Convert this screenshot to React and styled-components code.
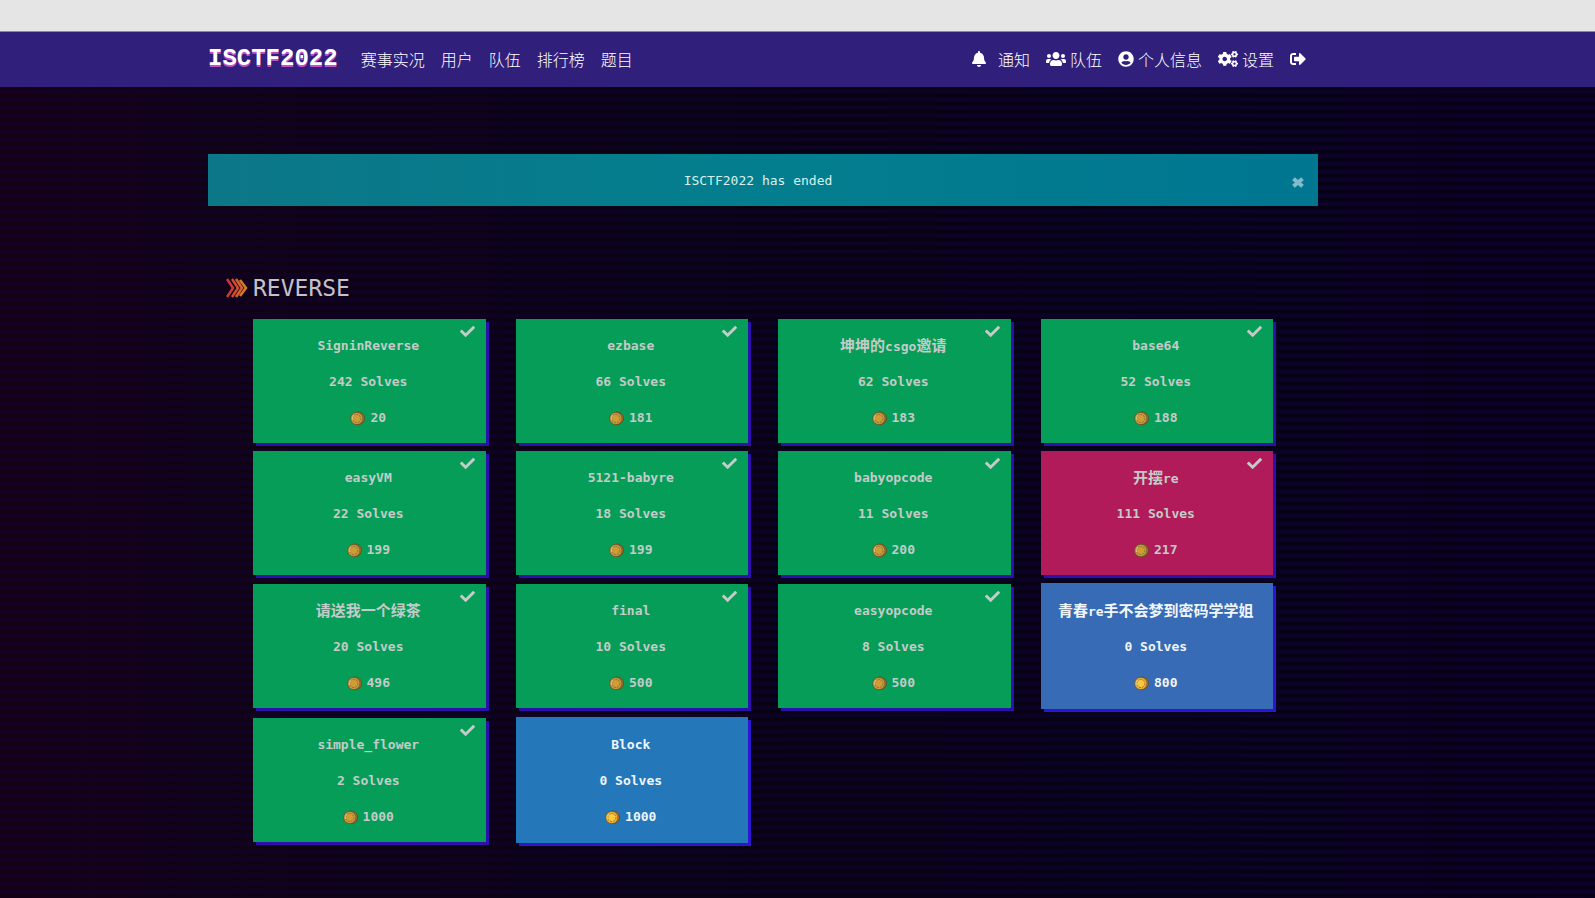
import React from 'react'
import styled, {createGlobalStyle} from 'styled-components'
import {
  FaBell,
  FaUsers,
  FaUserCircle,
  FaCogs,
  FaSignOutAlt,
  FaCheck
} from 'react-icons/fa'

const GlobalStyle = createGlobalStyle`
  * {
    box-sizing: border-box;
  }

  body {
    margin: 0;
    background: #06040f;
    color: #c4c2c8;
    font-family: 'DejaVu Sans Mono', 'Noto Sans CJK SC', monospace;
    font-size: 13px;
  }
`

const Page = styled.div`
  display: flex;
  flex-direction: column;
  min-height: 100vh;
  background:
    repeating-linear-gradient(
      180deg,
      rgba(16, 0, 48, 0) 0,
      rgba(16, 0, 48, 0.85) 3px,
      rgba(16, 0, 48, 0.85) 4px,
      rgba(16, 0, 48, 0) 7px,
      rgba(16, 0, 48, 0) 8px
    ),
    linear-gradient(90deg, #18000d 0%, #0f040e 20%, #05040b 50%, #040310 75%, #050016 100%);
`

const BrowserEdge = styled.div`
  height: 32px;
  background: #e5e5e5;
  border-bottom: 1px solid #8a86a8;
`

const Container = styled.div`
  width: 100%;
  max-width: 1110px;
  margin: 0 auto;
`

const Navbar = styled.nav`
  height: 55px;
  padding-right: 69px;
  background: #301f7b;
`

const NavRow = styled(Container)`
  display: flex;
  align-items: center;
  height: 100%;
  padding: 0 12px 2px 0;
`

const Brand = styled.a`
  margin-right: 23px;
  color: #fff;
  font-family: 'Liberation Mono', monospace;
  font-size: 24px;
  font-weight: bold;
  line-height: 24px;
  text-decoration: none;
  text-shadow: 0 2px 0 #c24fd0;
`

const NavList = styled.div`
  display: flex;
  gap: 16px;
  margin-left: ${props => (props.$end ? 'auto' : '0')};
`

const NavLink = styled.a`
  display: flex;
  align-items: center;
  gap: ${props => props.$gap || 4}px;
  color: #fff;
  font-family: 'Noto Sans CJK SC', sans-serif;
  font-size: 16px;
  font-weight: 300;
  line-height: 24px;
  text-decoration: none;
`

const Main = styled.main`
  flex: 1;
  padding: 67px 69px 52px 0;
`

const Alert = styled(Container)`
  display: flex;
  align-items: center;
  height: 52px;
  padding: 0 14px 0 16px;
  background: linear-gradient(90deg, #0c7788 0%, #037e8e 50%, #007691 100%);
  color: #d6f1ec;
  font-size: 13px;
`

const AlertText = styled.span`
  flex: 1;
  text-align: center;
`

const CloseButton = styled.button`
  display: flex;
  padding: 4px 0 0;
  border: 0;
  background: none;
  color: #80bccb;
  cursor: pointer;
`

const Category = styled(Container)`
  padding: 66px 45px 0 18px;
`

const CategoryHeader = styled.header`
  display: flex;
  align-items: center;
  gap: 4px;
  height: 32px;
  margin-bottom: 15px;
`

const CategoryTitle = styled.h3`
  margin: 0;
  font-family: 'DejaVu Sans Mono', monospace;
  font-size: 23px;
  font-weight: normal;
  line-height: 32px;
`

const Grid = styled.div`
  display: grid;
  grid-template-columns: repeat(4, 1fr);
  align-items: center;
  gap: 8px 30px;
  padding-left: 27px;
`

const tones = {
  solved: '#069d58',
  pink: '#b11b59',
  steel: '#376bb5',
  blue: '#2478ba'
}

const Challenge = styled.button`
  position: relative;
  display: flex;
  flex-direction: column;
  justify-content: center;
  align-items: center;
  gap: 12px;
  height: ${props => (props.$solved ? 124 : 126)}px;
  padding: 2px 2px 0 0;
  border: 0;
  background: ${props => tones[props.$tone]};
  box-shadow: 3px 3px 0 ${props => (props.$solved ? '#2b10ad' : '#3014d4')};
  color: ${props => (props.$solved ? '#c4cbc8' : '#f0f5fa')};
  font-family: 'DejaVu Sans Mono', 'Noto Sans CJK SC', monospace;
  font-size: 13px;
  font-weight: bold;
  line-height: 24px;
  white-space: nowrap;
  cursor: pointer;
`

const Tick = styled(FaCheck)`
  position: absolute;
  top: 5px;
  right: 11px;
  font-size: 15px;
`

const Line = styled.span`
  display: flex;
  align-items: center;
  gap: 5px;
`

const Name = styled.span`
  height: 24px;
`

const Han = styled.span`
  font-size: 15px;
`

function Chevrons () {
  return <svg width='23' height='20' viewBox='0 0 23 20' fill='none' strokeWidth='2.6' aria-hidden='true'>
    <path d='M1 1 7 10 1 19' stroke='#c93a34' />
    <path d='M6 1 12 10 6 19' stroke='#d24a2c' />
    <path d='M10 1 16 10 10 19' stroke='#d4602a' />
    <path d='M14 2 20 10 14 18' stroke='#d27a2c' />
  </svg>
}

function Cross () {
  return <svg width='12' height='11' viewBox='0 0 12 11' stroke='currentColor' strokeWidth='4' strokeLinecap='square' aria-hidden='true'>
    <path d='M3 3 9 8M9 3 3 8' />
  </svg>
}

function Coin ({dim}) {
  const face = dim ? '#cf9c35' : '#fdc63c'
  const rim = dim ? '#c39a3c' : '#e6b33f'
  const edge = dim ? '#b0762a' : '#c9791f'
  return <svg width='15' height='15' viewBox='0 0 15 15' aria-hidden='true'>
    <circle cx='8.2' cy='7.3' r='6.3' fill={edge} stroke='#5f4420' strokeWidth='.8' />
    <circle cx='6.8' cy='7.5' r='6.2' fill={rim} stroke='#5f4a26' strokeWidth='.7' />
    <circle cx='6.8' cy='7.5' r='4' fill={face} stroke='#7d6336' strokeWidth='.8' strokeDasharray='2 1' />
    <path d='M2.6 9V6L4 4' fill='none' stroke='#e0cfa0' strokeWidth='.8' />
  </svg>
}

const challenges = [
  {name: 'SigninReverse', solves: 242, value: 20, solved: true},
  {name: 'ezbase', solves: 66, value: 181, solved: true},
  {name: '坤坤的csgo邀请', solves: 62, value: 183, solved: true},
  {name: 'base64', solves: 52, value: 188, solved: true},
  {name: 'easyVM', solves: 22, value: 199, solved: true},
  {name: '5121-babyre', solves: 18, value: 199, solved: true},
  {name: 'babyopcode', solves: 11, value: 200, solved: true},
  {name: '开摆re', solves: 111, value: 217, solved: true, tone: 'pink'},
  {name: '请送我一个绿茶', solves: 20, value: 496, solved: true},
  {name: 'final', solves: 10, value: 500, solved: true},
  {name: 'easyopcode', solves: 8, value: 500, solved: true},
  {name: '青春re手不会梦到密码学学姐', solves: 0, value: 800, tone: 'steel'},
  {name: 'simple_flower', solves: 2, value: 1000, solved: true},
  {name: 'Block', solves: 0, value: 1000, tone: 'blue'}
]

// Chinese runs are set larger than the latin ones
const renderName = name => name
  .split(/([\u4e00-\u9fff]+)/)
  .filter(Boolean)
  .map((part, i) => /[\u4e00-\u9fff]/.test(part) ? <Han key={i}>{part}</Han> : part)

function App () {
  return <Page>
    <GlobalStyle />
    <BrowserEdge />
    <Navbar>
      <NavRow>
        <Brand href='#'>{'ISCTF2022'}</Brand>
        <NavList>
          <NavLink href='#'>{'赛事实况'}</NavLink>
          <NavLink href='#'>{'用户'}</NavLink>
          <NavLink href='#'>{'队伍'}</NavLink>
          <NavLink href='#'>{'排行榜'}</NavLink>
          <NavLink href='#'>{'题目'}</NavLink>
        </NavList>
        <NavList $end>
          <NavLink href='#' $gap={11}><FaBell />{'通知'}</NavLink>
          <NavLink href='#'><FaUsers size={20} />{'队伍'}</NavLink>
          <NavLink href='#'><FaUserCircle />{'个人信息'}</NavLink>
          <NavLink href='#'><FaCogs size={20} />{'设置'}</NavLink>
          <NavLink href='#' aria-label='Logout'><FaSignOutAlt /></NavLink>
        </NavList>
      </NavRow>
    </Navbar>
    <Main>
      <Alert role='alert'>
        <AlertText>{'ISCTF2022 has ended'}</AlertText>
        <CloseButton type='button' aria-label='Close'><Cross /></CloseButton>
      </Alert>
      <Category as='section'>
        <CategoryHeader>
          <Chevrons />
          <CategoryTitle>{'REVERSE'}</CategoryTitle>
        </CategoryHeader>
        <Grid>
          {challenges.map(item =>
            <Challenge key={item.name} type='button' $tone={item.tone || 'solved'} $solved={item.solved}>
              {item.solved && <Tick />}
              <Name>{renderName(item.name)}</Name>
              <Line>{`${item.solves} Solves`}</Line>
              <Line><Coin dim={item.solved} />{item.value}</Line>
            </Challenge>
          )}
        </Grid>
      </Category>
    </Main>
  </Page>
}

export default App
